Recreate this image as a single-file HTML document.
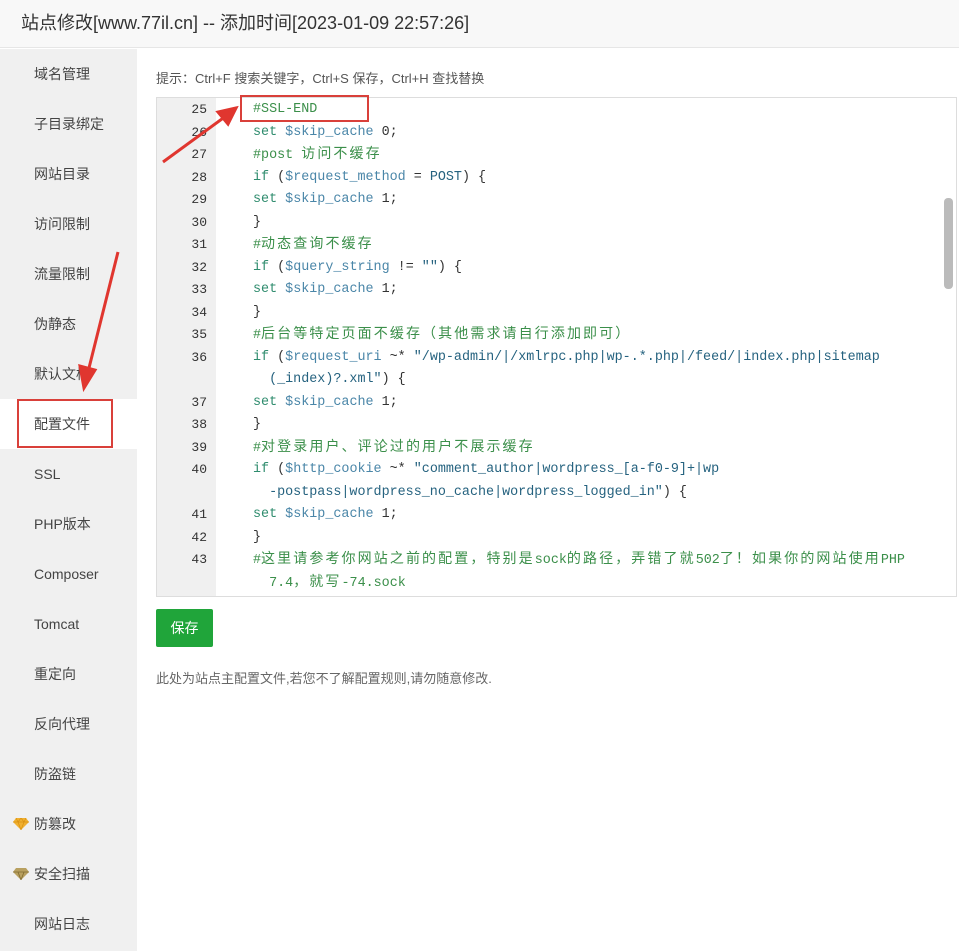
<!DOCTYPE html>
<html><head><meta charset="utf-8"><style>
*{margin:0;padding:0;box-sizing:border-box}
body{width:959px;height:951px;background:#fff;font-family:"Liberation Sans","Noto Sans CJK SC",sans-serif;position:relative;overflow:hidden;color:#333}
.title{height:48px;border-bottom:1px solid #e6e6e6;background:#f8f8f8;font-size:18px;line-height:46px;padding-left:21px;color:#333}
.side{position:absolute;left:0;top:49px;width:137px;bottom:0;background:#f0f0f0}
.side div{height:50px;line-height:50px;padding-left:34px;font-size:14px;color:#444;position:relative}
.side .act{background:#fff}
.gem{position:absolute;left:13px;top:19px;width:16px;height:12px}
.hint{position:absolute;left:156px;top:68px;font-size:13px;color:#555}
.ed{position:absolute;left:156px;top:97px;width:801px;height:500px;border:1px solid #ddd;overflow:hidden;background:#fff}
.gut{position:absolute;left:0;top:0;width:59px;height:100%;background:#f0f0f0}
.code{position:absolute;left:0;top:1px;font-family:"Liberation Mono","Noto Sans CJK SC",monospace;font-size:13.4px;}
.r{height:22.5px;line-height:22.5px;white-space:pre;position:relative}
.n{position:absolute;left:0;width:50px;text-align:right;color:#333;font-size:13px}
.t{position:absolute;left:96px;color:#333}
.k{color:#2f8c6e}.v{color:#4a86a8}.c{color:#3b8f4a}.s{color:#25627f}
.z{font-size:14px;letter-spacing:2.1px}
.sb{position:absolute;right:3px;top:100px;width:9px;height:91px;background:#bbb;border-radius:4px}
.btn{position:absolute;left:156px;top:609px;width:57px;height:38px;background:#20a53a;color:#fff;font-size:14px;line-height:38px;text-align:center;border-radius:2px}
.note{position:absolute;left:156px;top:668px;font-size:13px;color:#666}
.box{position:absolute;border:2px solid #d9403a}
</style></head><body>
<div class="title">站点修改[www.77il.cn] -- 添加时间[2023-01-09 22:57:26]</div>
<div class="side">
<div>域名管理</div><div>子目录绑定</div><div>网站目录</div><div>访问限制</div><div>流量限制</div><div>伪静态</div><div>默认文档</div><div class="act">配置文件</div><div>SSL</div><div>PHP版本</div><div>Composer</div><div>Tomcat</div><div>重定向</div><div>反向代理</div><div>防盗链</div>
<div><svg class="gem" viewBox="0 0 16 12"><path d="M0 4L3 0H13L16 4L8 12Z" fill="#f0b030"/><path d="M0 4H16M5 4L8 12L11 4M3 0L5 4L8 0L11 4L13 0" stroke="#d89010" fill="none" stroke-width=".7"/></svg>防篡改</div>
<div><svg class="gem" viewBox="0 0 16 12"><path d="M0 4L3 0H13L16 4L8 12Z" fill="#b8a060"/><path d="M0 4H16M5 4L8 12L11 4" stroke="#806a30" fill="none" stroke-width=".8"/></svg>安全扫描</div>
<div>网站日志</div>
</div>
<div class="hint">提示：Ctrl+F 搜索关键字，Ctrl+S 保存，Ctrl+H 查找替换</div>
<div class="ed"><div class="gut"></div>
<div class="code">
<div class="r"><span class="n">25</span><span class="t c">#SSL-END</span></div>
<div class="r"><span class="n">26</span><span class="t"><span class="k">set</span> <span class="v">$skip_cache</span> 0;</span></div>
<div class="r"><span class="n">27</span><span class="t c">#post <span class="z">访问不缓存</span></span></div>
<div class="r"><span class="n">28</span><span class="t"><span class="k">if</span> (<span class="v">$request_method</span> = <span class="s">POST</span>) {</span></div>
<div class="r"><span class="n">29</span><span class="t"><span class="k">set</span> <span class="v">$skip_cache</span> 1;</span></div>
<div class="r"><span class="n">30</span><span class="t">}</span></div>
<div class="r"><span class="n">31</span><span class="t c">#<span class="z">动态查询不缓存</span></span></div>
<div class="r"><span class="n">32</span><span class="t"><span class="k">if</span> (<span class="v">$query_string</span> != <span class="s">""</span>) {</span></div>
<div class="r"><span class="n">33</span><span class="t"><span class="k">set</span> <span class="v">$skip_cache</span> 1;</span></div>
<div class="r"><span class="n">34</span><span class="t">}</span></div>
<div class="r"><span class="n">35</span><span class="t c">#<span class="z">后台等特定页面不缓存（其他需求请自行添加即可）</span></span></div>
<div class="r"><span class="n">36</span><span class="t"><span class="k">if</span> (<span class="v">$request_uri</span> ~* <span class="s">"/wp-admin/|/xmlrpc.php|wp-.*.php|/feed/|index.php|sitemap</span></span></div>
<div class="r"><span class="t"><span class="s">  (_index)?.xml"</span>) {</span></div>
<div class="r"><span class="n">37</span><span class="t"><span class="k">set</span> <span class="v">$skip_cache</span> 1;</span></div>
<div class="r"><span class="n">38</span><span class="t">}</span></div>
<div class="r"><span class="n">39</span><span class="t c">#<span class="z">对登录用户、评论过的用户不展示缓存</span></span></div>
<div class="r"><span class="n">40</span><span class="t"><span class="k">if</span> (<span class="v">$http_cookie</span> ~* <span class="s">"comment_author|wordpress_[a-f0-9]+|wp</span></span></div>
<div class="r"><span class="t"><span class="s">  -postpass|wordpress_no_cache|wordpress_logged_in"</span>) {</span></div>
<div class="r"><span class="n">41</span><span class="t"><span class="k">set</span> <span class="v">$skip_cache</span> 1;</span></div>
<div class="r"><span class="n">42</span><span class="t">}</span></div>
<div class="r"><span class="n">43</span><span class="t c">#<span class="z">这里请参考你网站之前的配置，特别是</span>sock<span class="z">的路径，弄错了就</span>502<span class="z">了！如果你的网站使用</span>PHP</span></div>
<div class="r"><span class="t c">  7.4<span class="z">，就写</span>-74.sock</span></div>
</div>
<div class="sb"></div>
</div>
<div class="btn">保存</div>
<div class="note">此处为站点主配置文件,若您不了解配置规则,请勿随意修改.</div>
<div class="box" style="left:240px;top:95px;width:129px;height:27px"></div>
<div class="box" style="left:17px;top:399px;width:96px;height:49px"></div>
<svg style="position:absolute;left:0;top:0" width="959" height="951">
<g stroke="#e0362f" stroke-width="3" fill="#e0362f">
<line x1="163" y1="162" x2="226" y2="116"/><polygon points="236,108 218,112 228,124"/>
<line x1="118" y1="252" x2="88" y2="372"/><polygon points="84,388 80,366 95,370"/>
</g></svg>
</body></html>
